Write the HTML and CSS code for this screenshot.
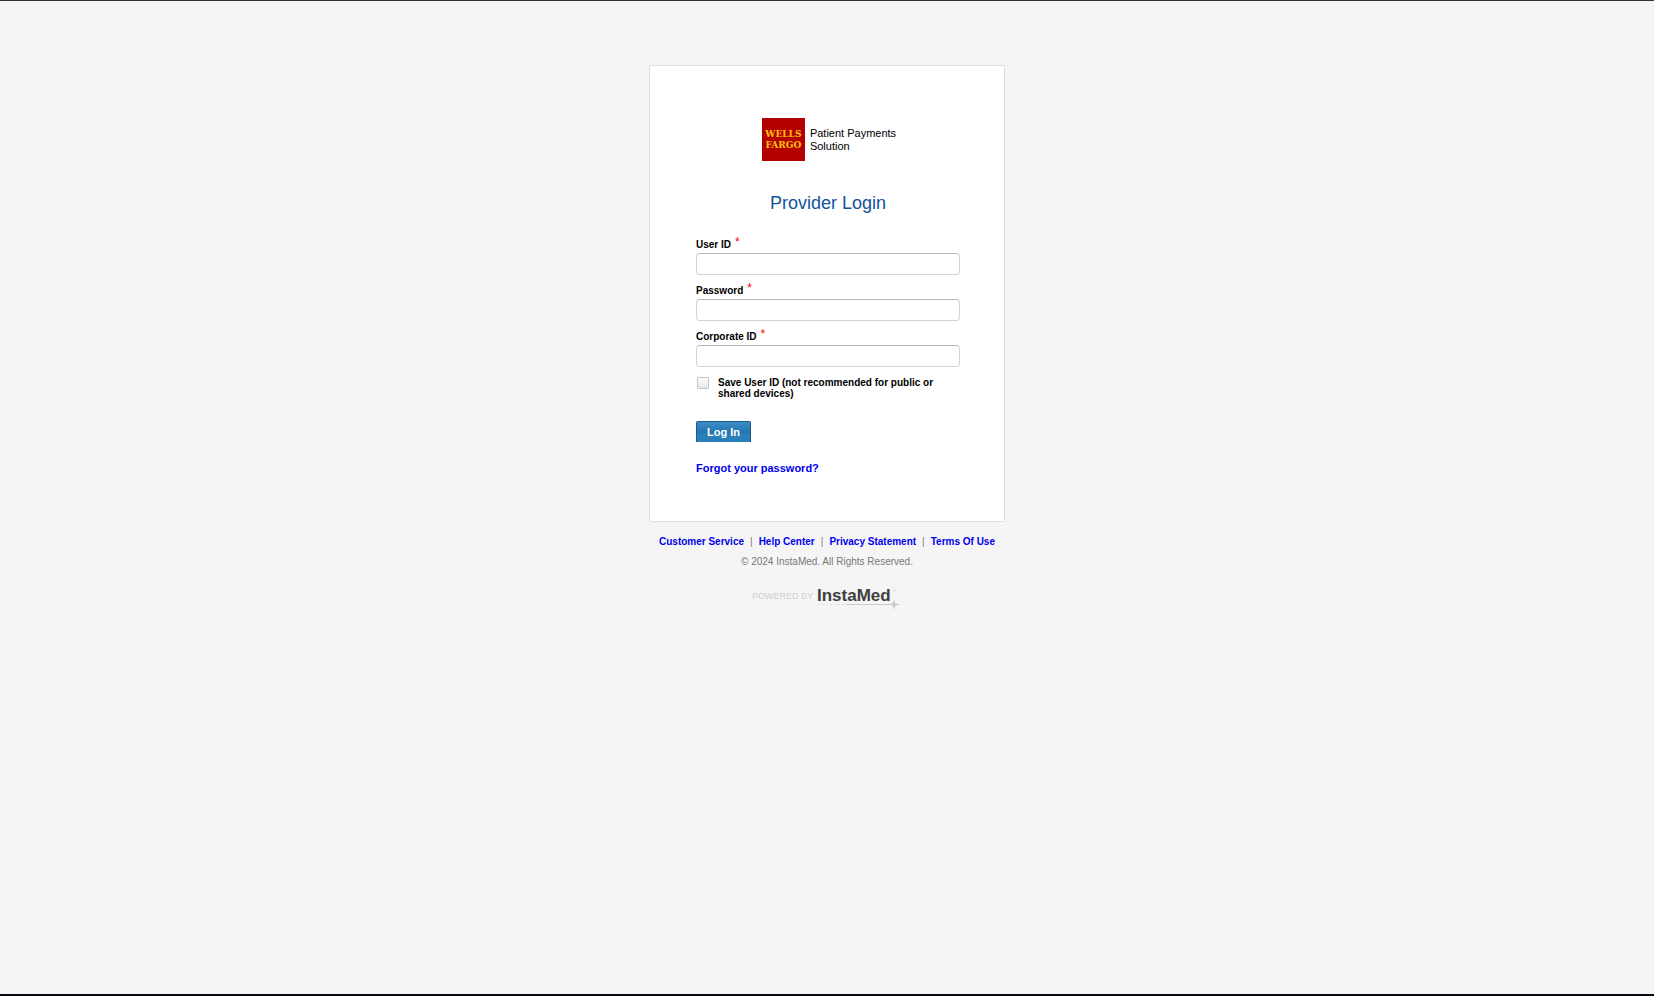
FILE: index.html
```html
<!DOCTYPE html>
<html lang="en">
<head>
<meta charset="utf-8">
<title>Provider Login</title>
<link rel="stylesheet" href="styles.css">
</head>
<body>
<div class="page">
  <main class="card">
    <div class="brand">
      <div class="brand-mark"><span>WELLS</span><span>FARGO</span></div>
      <div class="brand-name">Patient Payments<br>Solution</div>
    </div>
    <h1 class="title">Provider Login</h1>
    <form class="form">
      <div class="field">
        <label class="label" for="user">User ID <span class="required">*</span></label>
        <input class="input" id="user" type="text">
      </div>
      <div class="field">
        <label class="label" for="password">Password <span class="required">*</span></label>
        <input class="input" id="password" type="password">
      </div>
      <div class="field">
        <label class="label" for="corporate">Corporate ID <span class="required">*</span></label>
        <input class="input" id="corporate" type="text">
      </div>
      <div class="save">
        <input class="checkbox" id="save" type="checkbox">
        <label class="save-label" for="save">Save User ID (not recommended for public or shared devices)</label>
      </div>
      <button class="login" type="submit">Log In</button>
      <a class="forgot" href="#">Forgot your password?</a>
    </form>
  </main>
  <footer class="footer">
    <nav class="links">
      <a href="#">Customer Service</a><span>|</span><a href="#">Help Center</a><span>|</span><a href="#">Privacy Statement</a><span>|</span><a href="#">Terms Of Use</a>
    </nav>
    <p class="copyright">© 2024 InstaMed. All Rights Reserved.</p>
    <svg class="powered" width="150" height="24" viewBox="0 0 150 24" role="img" aria-label="Powered by InstaMed">
      <text class="powered-by" x="0" y="12">POWERED BY</text>
      <text class="powered-name" x="65" y="14">InstaMed</text>
      <circle cx="142.500" cy="3.500" r="1" fill="none" stroke="#d8d8d8" stroke-width=".7"/>
      <path d="M66 17.500H94" stroke="#dcdedf" stroke-dasharray="2 2"/>
      <path d="M94 17.500H140" stroke="#c9cccd"/>
      <path d="M142 12l1.200 4.300 4.800 1.200-4.800 1.200-1.200 4.300-1.200-4.300-4.800-1.200 4.800-1.200z" fill="#c9cccd"/>
    </svg>
  </footer>
</div>
</body>
</html>
```
FILE: styles.css
```css
* { box-sizing: border-box; }

body {
  margin: 0;
  background: #f5f5f5;
  color: #000;
  font-family: "Liberation Sans", Arial, sans-serif;
  font-size: 10px;
}

.page {
  display: flex;
  flex-direction: column;
  align-items: center;
  min-height: 100vh;
  padding: 64px 16px 0;
  border-top: 1px solid #3a2f40;
  border-bottom: 2px solid #0c0410;
}

.card {
  width: 100%;
  max-width: 356px;
  padding: 52px 44px 46px 46px;
  border: 1px solid #dedede;
  border-radius: 2px;
  background: #fff;
}

.brand {
  display: flex;
  justify-content: center;
  gap: 5px;
  padding-left: 2px;
}

.brand-mark {
  display: flex;
  flex-direction: column;
  align-items: center;
  justify-content: center;
  width: 43px;
  height: 43px;
  background: #b30000;
  color: #ffc20e;
  font: bold 9px/11px "DejaVu Serif", serif;
}

.brand-name {
  padding-top: 9px;
  font-size: 11px;
  line-height: 13px;
}

.title {
  margin: 32px 0 24px;
  color: #10549a;
  font-size: 18px;
  font-weight: normal;
  line-height: 20px;
  text-align: center;
}

.form {
  display: flex;
  flex-direction: column;
  align-items: flex-start;
}

.field {
  width: 100%;
  margin-bottom: 8px;
}

.label {
  display: flex;
  gap: 4px;
  height: 16px;
  font-weight: bold;
  line-height: 16px;
}

.required {
  color: #f00;
  font-size: 12px;
  font-weight: normal;
  line-height: 10px;
}

.input {
  display: block;
  width: 100%;
  height: 22px;
  padding: 2px 6px;
  border: 1px solid #d3d3d3;
  border-top-color: #b8b8b8;
  border-radius: 4px;
  background: #fff;
}

.save {
  display: flex;
  gap: 9px;
  padding: 1px 0 0 1px;
}

.checkbox {
  appearance: none;
  flex: none;
  width: 12px;
  height: 12px;
  margin: 1px 0 0;
  border: 1px solid #c4c4c4;
  border-radius: 1px;
  background: linear-gradient(#fff, #e6e6e6);
}

.save-label {
  padding-top: 1px;
  font-weight: bold;
  line-height: 11px;
}

.login {
  width: 55px;
  height: 21px;
  margin: 22px 0 19px;
  padding: 0 0 1px;
  border: 1px solid #1b5c8c;
  border-bottom: 0;
  border-radius: 2px 2px 0 0;
  background: linear-gradient(#3a8dc5, #2473ad 55%, #2980b9 60%, #2980b9);
  color: #fff;
  font: bold 11px "Liberation Sans", Arial, sans-serif;
}

.forgot {
  font-size: 11px;
  font-weight: bold;
  line-height: 14px;
}

a {
  color: #00e;
  text-decoration: none;
}

.footer {
  display: flex;
  flex-direction: column;
  align-items: center;
  padding-top: 13px;
  color: #777;
}

.links {
  display: flex;
  flex-wrap: wrap;
  gap: 6px;
  line-height: 14px;
}

.links a { font-weight: bold; }

.copyright {
  margin: 6px 0 18px;
  line-height: 14px;
}

.powered-by {
  fill: #cfcfcf;
  font-size: 9px;
}

.powered-name {
  fill: #3f3f3f;
  font-size: 17px;
  font-weight: bold;
}
```
